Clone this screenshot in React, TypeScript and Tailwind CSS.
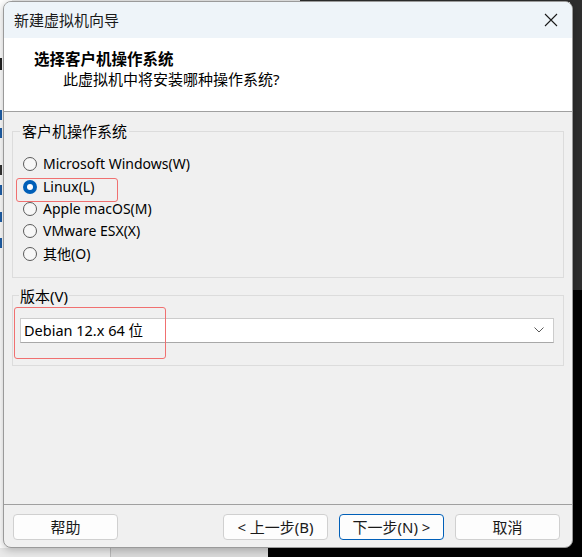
import React from "react";

const OS_OPTIONS = [
  { label: "Microsoft Windows(W)", checked: false },
  { label: "Linux(L)", checked: true },
  { label: "Apple macOS(M)", checked: false },
  { label: "VMware ESX(X)", checked: false },
  { label: "其他(O)", checked: false },
];

function Radio({ checked }: { checked: boolean }) {
  if (checked) {
    return (
      <span className="flex h-[14px] w-[14px] items-center justify-center rounded-full bg-[#005fb8]">
        <span className="h-[6px] w-[6px] rounded-full bg-white" />
      </span>
    );
  }
  return <span className="h-[14px] w-[14px] rounded-full border border-[#5a5a5a] bg-[#f7f7f7]" />;
}

function Button({ children, primary }: { children: React.ReactNode; primary?: boolean }) {
  return (
    <button
      className={
        primary
          ? "h-[26px] w-[105px] rounded-[4px] border border-[#005fb8] bg-[#fdfdfd] text-[15px] text-[#1a1a1a]"
          : "h-[26px] w-[105px] rounded-[4px] border border-[#d0d0d0] bg-[#fdfdfd] text-[15px] text-[#1a1a1a]"
      }
    >
      {children}
    </button>
  );
}

export default function App() {
  return (
    <div className="relative h-[557px] w-[582px] overflow-hidden bg-[#e9e9e9] font-['Noto_Sans','Noto_Sans_CJK_SC',sans-serif] text-[14px] text-black">
      {/* desktop behind the dialog: a page whose text is cut by the dialog */}
      <div className="absolute left-0 top-0 h-[548px] w-[12px] bg-white" />
      <div className="absolute left-0 top-[58px] h-[12px] w-[2px] bg-[#222]" />
      <div className="absolute left-0 top-[110px] h-[10px] w-[2px] bg-[#1f5fa8]" />
      <div className="absolute left-0 top-[128px] h-[10px] w-[2px] bg-[#1f5fa8]" />
      <div className="absolute left-0 top-[165px] h-[10px] w-[2px] bg-[#333]" />
      <div className="absolute left-0 top-[185px] h-[10px] w-[2px] bg-[#1f5fa8]" />
      <div className="absolute left-0 top-[212px] h-[10px] w-[2px] bg-[#1f5fa8]" />
      <div className="absolute left-0 top-[238px] h-[10px] w-[2px] bg-[#1f5fa8]" />
      <div className="absolute left-[300px] top-0 h-[2px] w-[282px] bg-[#2e2e2e]" />
      <div className="absolute right-0 top-0 h-[290px] w-[12px] bg-[#2e2e2e]" />
      <div className="absolute right-0 top-[290px] h-[267px] w-[12px] bg-black" />
      <div className="absolute bottom-0 left-[110px] h-[12px] w-[158px] border-l border-[#b8b8b8] bg-[#dadada]" />
      <div className="absolute bottom-0 left-[268px] h-[12px] w-[314px] bg-black" />

      {/* dialog window */}
      <div className="absolute left-[3px] top-[1px] flex h-[547px] w-[570px] flex-col overflow-hidden rounded-[8px] border border-[#9a9a9a] bg-[#f0f0f0] shadow-[0_2px_8px_rgba(0,0,0,0.25)]">
        <div className="flex h-[36px] shrink-0 items-center justify-between bg-[#eef4f9] pl-[10px] pr-[14px]">
          <span className="text-[15px] text-[#1a1a1a]">新建虚拟机向导</span>
          <svg width="14" height="14" viewBox="0 0 14 14" className="text-[#1a1a1a]">
            <path d="M1 1L13 13M13 1L1 13" stroke="currentColor" strokeWidth="1.1" />
          </svg>
        </div>

        <div className="flex h-[73px] shrink-0 flex-col bg-white pl-[30px] pt-[10px]">
          <span className="text-[15.5px] font-bold leading-[22px]">选择客户机操作系统</span>
          <span className="ml-[29px] text-[15px] leading-[18px]">此虚拟机中将安装哪种操作系统?</span>
        </div>
        <div className="h-px shrink-0 bg-[#a0a0a0]" />

        <div className="relative flex flex-1 flex-col px-[8px]">
          <fieldset className="mt-[9px] border border-[#dcdcdc] pb-[12px]">
            <legend className="ml-[7px] px-[2px] text-[15px] leading-[20px]">客户机操作系统</legend>
            <div className="mt-[12px] flex flex-col">
              {OS_OPTIONS.map((o) => (
                <label key={o.label} className="flex h-[22.4px] items-center gap-[6px] pl-[10px]">
                  <Radio checked={o.checked} />
                  <span className="text-[14px] leading-[20px]">{o.label}</span>
                </label>
              ))}
            </div>
          </fieldset>

          <fieldset className="mt-[8px] border border-[#dcdcdc] pb-[22px] pl-[7px] pr-[9px]">
            <legend className="ml-[-1px] px-[1px] text-[15px] leading-[20px]">版本(V)</legend>
            <div className="mt-[12px] flex h-[25px] items-center justify-between border border-[#cccccc] border-b-[#a8a8a8] bg-white pl-[3px] pr-[9px]">
              <span className="text-[14.5px]">Debian 12.x 64 位</span>
              <svg width="10" height="6" viewBox="0 0 10 6">
                <path d="M0.5 0.5L5 5L9.5 0.5" fill="none" stroke="#5a5a5a" strokeWidth="1" />
              </svg>
            </div>
          </fieldset>

          {/* red annotation boxes */}
          <div className="pointer-events-none absolute left-[12px] top-[66px] h-[24px] w-[102px] rounded-[3px] border-[1.5px] border-[#f07070]" />
          <div className="pointer-events-none absolute left-[10px] top-[195px] h-[52px] w-[152px] rounded-[3px] border-[1.5px] border-[#f07070]" />
        </div>

        <div className="h-px shrink-0 bg-[#a0a0a0]" />
        <div className="flex h-[42px] shrink-0 items-start justify-between pl-[9px] pr-[12px] pt-[9px]">
          <Button>帮助</Button>
          <div className="flex gap-[11px]">
            <Button>&lt; 上一步(B)</Button>
            <Button primary>下一步(N) &gt;</Button>
            <Button>取消</Button>
          </div>
        </div>
      </div>
    </div>
  );
}
